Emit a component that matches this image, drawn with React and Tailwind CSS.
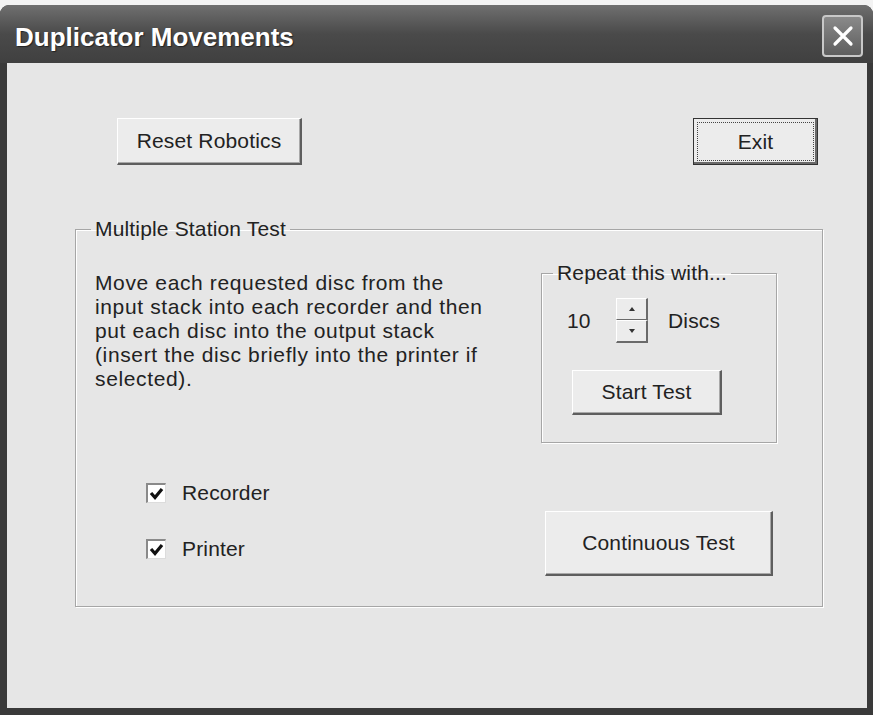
import React from 'react';

// classic 3D push button
const Button = ({ children, className = '' }) => (
    <div
        className={`flex items-center justify-center bg-[#ececec] border-t border-l border-white border-r-2 border-b-2 border-r-[#5e5e5e] border-b-[#5e5e5e] shadow-[inset_-1px_-1px_0_#a9a9a9] text-[21px] text-[#222] ${className}`}
    >
        {children}
    </div>
);

const CheckBox = ({ label }) => (
    <div className="flex items-center gap-[16px] h-[24px]">
        <div className="w-[20px] h-[20px] bg-white border-t-2 border-l-2 border-[#8a8a8a] border-r border-b border-r-[#dcdcdc] border-b-[#dcdcdc] flex items-center justify-center">
            <svg width="15" height="13" viewBox="0 0 15 13">
                <path d="M2 6 L6 10.5 L13 2" fill="none" stroke="#111" strokeWidth="3.2" />
            </svg>
        </div>
        <span className="text-[21px] leading-[24px] text-[#222]">{label}</span>
    </div>
);

const App = () => {
    return (
        <div className="w-[873px] h-[715px] bg-[#f3f3f3] pt-[5px] flex flex-col font-['Liberation_Sans',Arial,sans-serif] tracking-[0.01em]">
            <div className="flex-1 flex flex-col rounded-t-[9px] bg-[#3a3a3a] overflow-hidden">
                {/* Title bar */}
                <div className="h-[58px] flex items-center justify-between pl-[15px] pr-[10px] bg-linear-to-b from-[#707070] via-[#4a4a4a] to-[#404040]">
                    <span className="mt-[6px] text-white font-bold text-[26px] tracking-normal [text-shadow:1px_1px_1px_#222]">
                        Duplicator Movements
                    </span>
                    <div className="w-[41px] h-[42px] mt-[4px] rounded-[4px] border-2 border-[#c8c8c8] bg-linear-to-b from-[#8a8a8a] to-[#5e5e5e] flex items-center justify-center">
                        <svg width="24" height="24" viewBox="0 0 24 24">
                            <path d="M4 4 L20 20 M20 4 L4 20" stroke="white" strokeWidth="3.2" strokeLinecap="round" />
                        </svg>
                    </div>
                </div>

                {/* Dialog body */}
                <div className="flex-1 ml-[7px] mr-[6px] mb-[7px] bg-[#e6e6e6] pt-[55px]">
                    <div className="flex justify-between pl-[110px] pr-[49px]">
                        <Button className="w-[185px] h-[47px]">Reset Robotics</Button>
                        <div className="w-[125px] h-[47px] border border-[#333] bg-[#ececec] p-[3px] shadow-[inset_-2px_-2px_0_#6a6a6a]">
                            <div className="w-full h-full border border-dotted border-[#444] flex items-center justify-center text-[21px] text-[#222]">
                                Exit
                            </div>
                        </div>
                    </div>

                    <fieldset className="mt-[52px] ml-[68px] mr-[44px] border border-[#a6a6a6] shadow-[1px_1px_0_#fff,inset_1px_1px_0_#fff] pb-[30px]">
                        <legend className="ml-[15px] px-[4px] leading-[24px] text-[21px] text-[#222]">
                            Multiple Station Test
                        </legend>

                        <div className="flex justify-between items-start mt-[20px]">
                            <p className="ml-[19px] mt-[10px] text-[21px] leading-[24px] tracking-[0.03em] text-[#222]">
                                Move each requested disc from the
                                <br />
                                input stack into each recorder and then
                                <br />
                                put each disc into the output stack
                                <br />
                                (insert the disc briefly into the printer if
                                <br />
                                selected).
                            </p>

                            <fieldset className="w-[236px] mr-[45px] border border-[#a6a6a6] shadow-[1px_1px_0_#fff,inset_1px_1px_0_#fff] pb-[27px]">
                                <legend className="ml-[11px] px-[4px] leading-[24px] text-[21px] text-[#222]">
                                    Repeat this with...
                                </legend>
                                <div className="flex items-center mt-[13px] pl-[25px]">
                                    <span className="text-[21px] text-[#222] w-[49px]">10</span>
                                    <div className="flex flex-col w-[32px]">
                                        <div className="h-[22px] bg-[#ececec] border-t border-l border-white border-r-2 border-b border-r-[#6a6a6a] border-b-[#6a6a6a] flex items-center justify-center">
                                            <svg width="6" height="4" viewBox="0 0 6 4"><path d="M3 0 L6 4 L0 4 Z" fill="#333" /></svg>
                                        </div>
                                        <div className="h-[23px] bg-[#ececec] border-t border-l border-white border-r-2 border-b-2 border-r-[#6a6a6a] border-b-[#6a6a6a] flex items-center justify-center">
                                            <svg width="6" height="4" viewBox="0 0 6 4"><path d="M0 0 L6 0 L3 4 Z" fill="#333" /></svg>
                                        </div>
                                    </div>
                                    <span className="ml-[20px] text-[21px] text-[#222]">Discs</span>
                                </div>
                                <Button className="w-[150px] h-[45px] mt-[27px] ml-[30px]">Start Test</Button>
                            </fieldset>
                        </div>

                        <div className="flex justify-between items-start mt-[36px]">
                            <div className="flex flex-col gap-[32px] ml-[70px] pt-[2px]">
                                <CheckBox label="Recorder" />
                                <CheckBox label="Printer" />
                            </div>
                            <Button className="w-[228px] h-[65px] mt-[32px] mr-[49px]">Continuous Test</Button>
                        </div>
                    </fieldset>
                </div>
            </div>
        </div>
    );
};

export default App;
